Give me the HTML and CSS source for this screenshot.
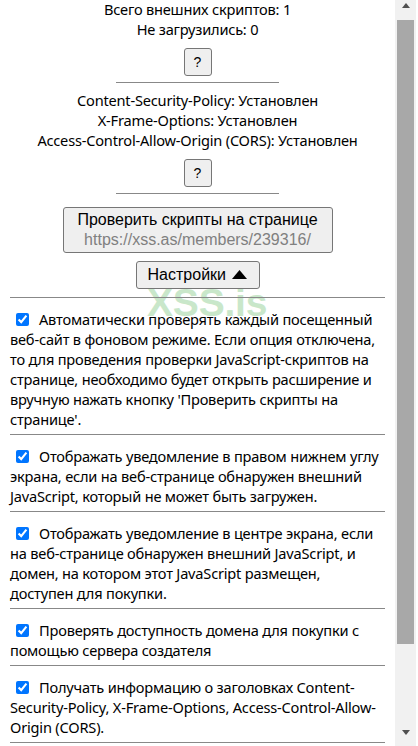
FILE: index.html
```html
<!DOCTYPE html>
<html lang="ru">
<head>
    <meta charset="UTF-8">
    <meta name="viewport" content="width=device-width, initial-scale=1.0">
    <title>Проверка скриптов</title>
    <link rel="stylesheet" href="styles.css">
</head>
<body>

    <div class="window">
        <div class="content">
            <div class="summary">
                <div>Всего внешних скриптов: 1</div>
                <div>Не загрузились: 0</div>
            </div>
            <button class="help">?</button>
            <hr class="short">

            <div class="headers">
                <div>Content-Security-Policy: Установлен</div>
                <div>X-Frame-Options: Установлен</div>
                <div>Access-Control-Allow-Origin (CORS): Установлен</div>
            </div>
            <button class="help">?</button>
            <hr class="short">

            <button class="check">
                Проверить скрипты на странице<br>
                <span class="url">https://xss.as/members/239316/</span>
            </button>
            <button class="settings">
                Настройки
                <svg class="caret" width="15" height="9" viewBox="0 0 15 9"><path d="M7.5 0 L15 9 L0 9 Z" fill="#000"/></svg>
            </button>

            <div class="options">
                <hr>
                <label class="option"><input type="checkbox" checked>Автоматически проверять каждый посещенный веб-сайт в фоновом режиме. Если опция отключена, то для проведения проверки JavaScript-скриптов на странице, необходимо будет открыть расширение и вручную нажать кнопку 'Проверить скрипты на странице'.</label>
                <hr>
                <label class="option"><input type="checkbox" checked>Отображать уведомление в правом нижнем углу экрана, если на веб-странице обнаружен внешний JavaScript, который не может быть загружен.</label>
                <hr>
                <label class="option"><input type="checkbox" checked>Отображать уведомление в центре экрана, если на веб-странице обнаружен внешний JavaScript, и домен, на котором этот JavaScript размещен, доступен для покупки.</label>
                <hr>
                <label class="option"><input type="checkbox" checked>Проверять доступность домена для покупки с помощью сервера создателя</label>
                <hr>
                <label class="option"><input type="checkbox" checked>Получать информацию о заголовках Content-Security-Policy, X-Frame-Options, Access-Control-Allow-Origin (CORS).</label>
                <hr>
            </div>
        </div>

        <div class="scrollbar">
            <div class="arrow up"></div>
            <div class="thumb"></div>
            <div class="arrow down"></div>
        </div>
    </div>

    <div class="watermark">XSS.is</div>

</body>
</html>
```

FILE: styles.css
```css
html {
    background: #fff;
}
html, body {
    margin: 0;
    height: 746px;
    overflow: hidden;
}
body {
    font-family: "Noto Sans", "Open Sans", sans-serif;
    font-size: 14.6px;
    letter-spacing: -0.2px;
    line-height: 20px;
    color: #000;
    position: relative;
}
.window {
    display: flex;
    align-items: flex-start;
    height: 746px;
}
.content {
    width: 395px;
    flex-shrink: 0;
    box-sizing: border-box;
    padding: 0 10px;
    display: flex;
    flex-direction: column;
    align-items: center;
    text-align: center;
}
.content > * {
    flex-shrink: 0;
}
.summary {
    margin-top: -1px;
}
hr {
    border: none;
    border-top: 1px solid #888;
    margin: 0;
    width: 100%;
}
hr.short {
    width: 163px;
    margin: 6px 0 0;
}
button {
    font-family: "Liberation Sans", Arial, sans-serif;
    letter-spacing: 0;
    background: #efefef;
    border: 1px solid #767676;
    border-radius: 3px;
    color: #000;
    padding: 0;
}
.help {
    width: 28px;
    height: 28px;
    font-size: 14px;
    margin-top: 9px;
}
.headers {
    margin-top: 7px;
}
.check {
    margin-top: 13px;
    width: 270px;
    height: 46px;
    font-size: 16px;
    line-height: 20px;
}
.url {
    color: #808080;
}
.settings {
    margin-top: 8px;
    width: 124px;
    height: 28px;
    font-size: 16px;
}
.caret {
    margin-left: 2px;
    vertical-align: 1px;
}
.options {
    margin-top: 8px;
    width: 100%;
    text-align: left;
}
.option {
    display: block;
    padding: 11px 0 5px;
}
.option input {
    width: 13px;
    height: 13px;
    margin: 0 10px 0 6px;
    vertical-align: -1px;
}
.scrollbar {
    width: 21px;
    height: 746px;
    flex-shrink: 0;
    background: #f1f1f1;
    display: flex;
    flex-direction: column;
    align-items: center;
}
.arrow {
    width: 0;
    height: 0;
    border-left: 4.5px solid transparent;
    border-right: 4.5px solid transparent;
}
.arrow.up {
    border-bottom: 5px solid #505050;
    margin: 3px 0 12px;
}
.thumb {
    width: 17px;
    height: 624px;
    background: #a8a8a8;
}
.arrow.down {
    border-top: 5px solid #505050;
    margin-top: 86px;
}
.watermark {
    position: absolute;
    left: 147px;
    top: 285px;
    font-family: "Liberation Sans", Arial, sans-serif;
    font-weight: bold;
    font-size: 39px;
    line-height: 36px;
    color: #c9e7ca;
    z-index: -1;
    pointer-events: none;
}
```
